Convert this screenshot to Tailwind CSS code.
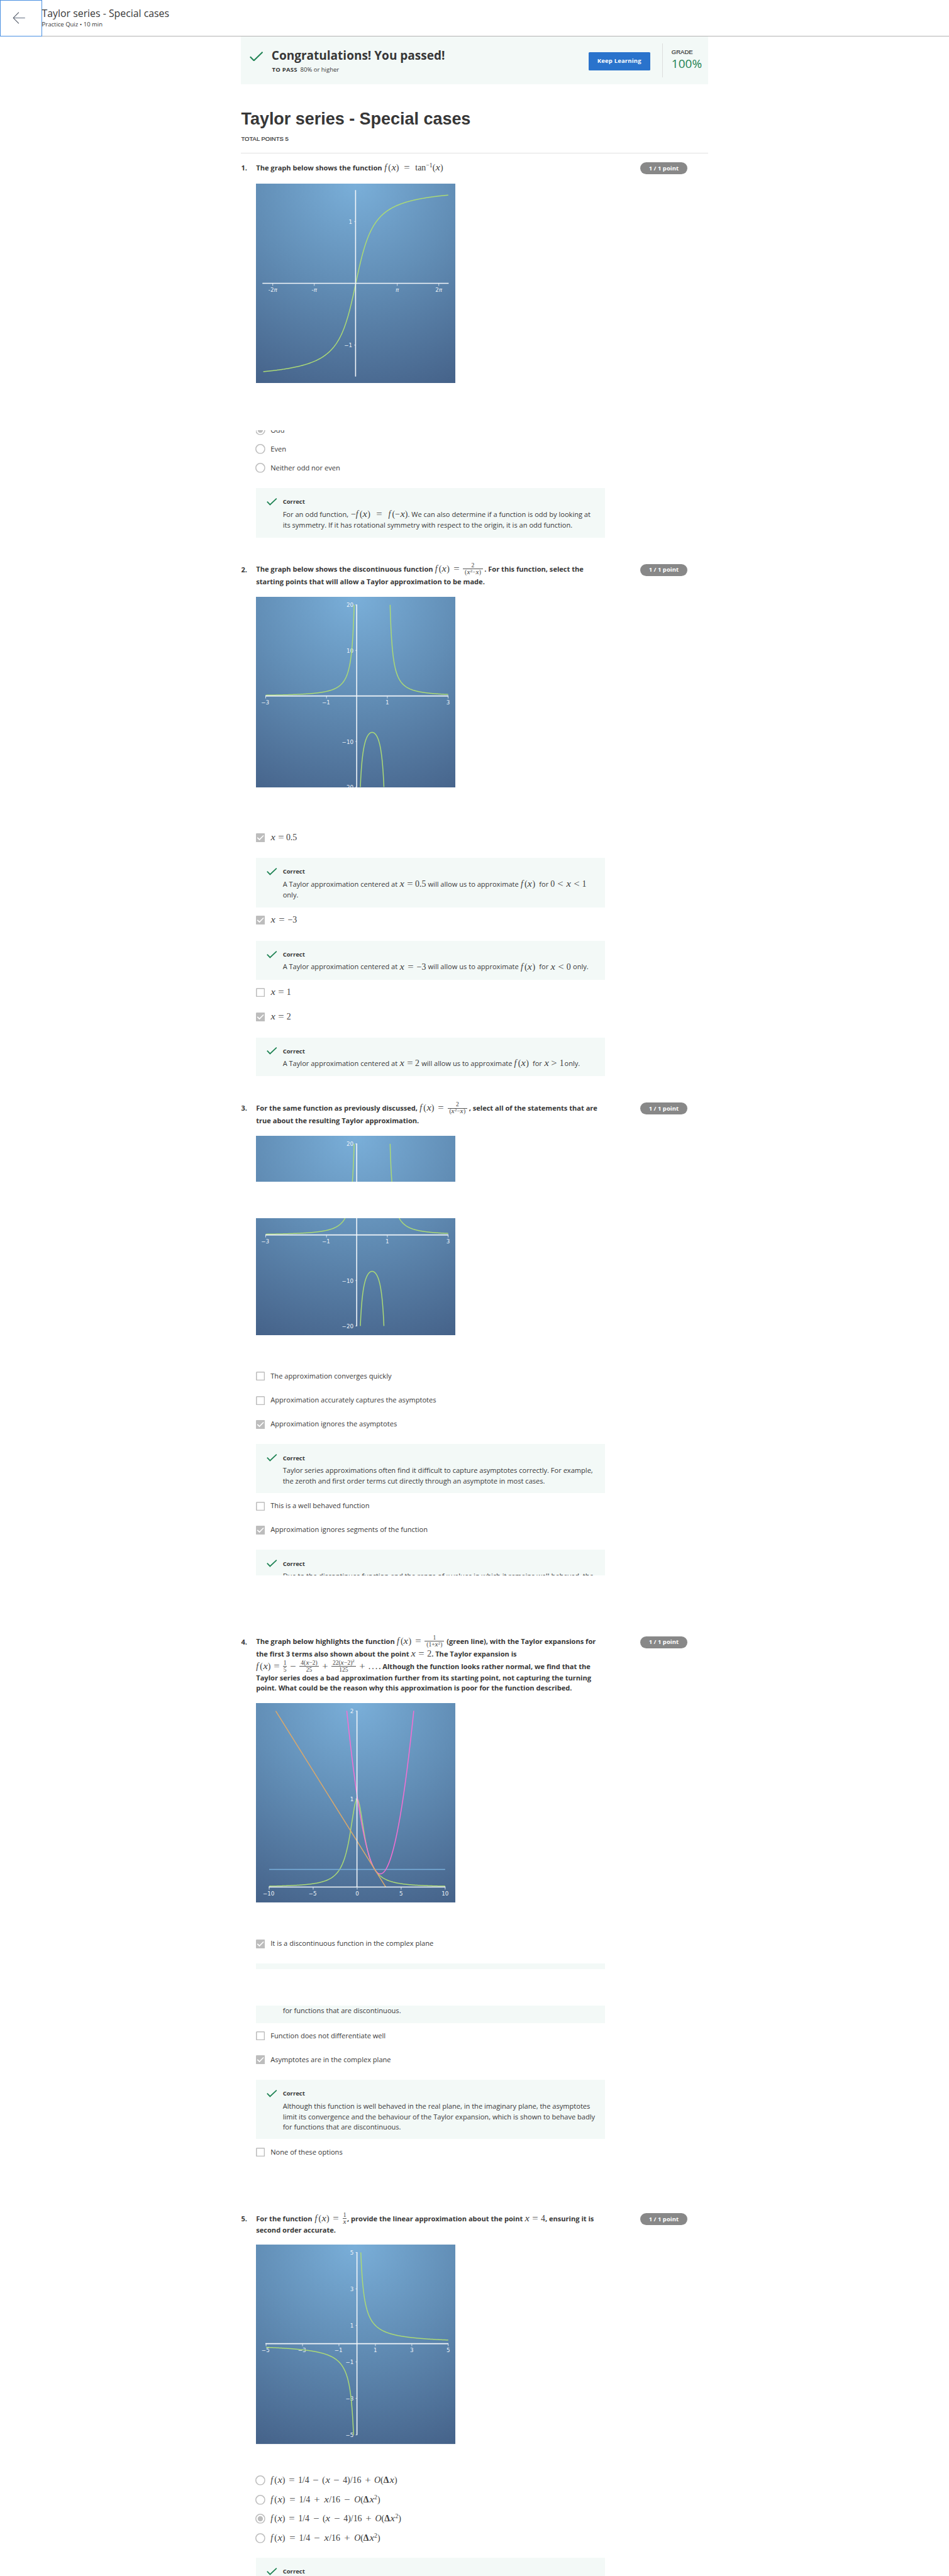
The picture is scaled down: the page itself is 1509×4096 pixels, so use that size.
<!DOCTYPE html>
<html lang="en">
<head>
<meta charset="utf-8">
<title>Taylor series - Special cases</title>
<script src="https://cdn.jsdelivr.net/npm/@tailwindcss/browser@4"></script>
</head>
<body class="bg-white overflow-x-hidden">
<svg class="hidden">
  <symbol id="tick" viewBox="0 0 21 15"><path d="M1 7.2 6.8 13.2 20 .8" fill="none" stroke="#1f8354" stroke-width="2.2"/></symbol>
  <symbol id="box-on" viewBox="0 0 18 18"><rect width="18" height="18" rx="1.5" fill="#bdbdbd"/><path d="M2.8 8.6 7 12.8 15.2 4.4" fill="none" stroke="#fff" stroke-width="2"/></symbol>
  <symbol id="box-off" viewBox="0 0 18 18"><rect x="1" y="1" width="16" height="16" rx="1" fill="#fff" stroke="#bdbdbd" stroke-width="2"/></symbol>
  <symbol id="radio-off" viewBox="0 0 20 20"><circle cx="10" cy="10" r="9" fill="#fff" stroke="#bdbdbd" stroke-width="2"/></symbol>
  <symbol id="radio-on" viewBox="0 0 20 20"><circle cx="10" cy="10" r="9" fill="#fff" stroke="#bdbdbd" stroke-width="2"/><circle cx="10" cy="10" r="5.3" fill="#bdbdbd"/></symbol>
</svg>
<div class="[zoom:0.7928] h-[5167px] overflow-hidden font-['Open_Sans',sans-serif] text-[14px] text-[#373737] whitespace-nowrap">

<header class="flex h-[73px] border-b border-[#b3b3b3]">
  <div class="flex h-[73px] w-[84px] items-center border border-[#4a90e2] border-b-2 pl-[24px]">
    <svg class="h-[24px] w-[25px]" viewBox="0 0 25 24" fill="none"><path d="M1.5 12H25" stroke="#8a93a0" stroke-width="1.8"/><path d="M12.5.8 1.5 12l11 11.2" stroke="#4b5361" stroke-width="1.3"/></svg>
  </div>
  <div class="pt-[13px]">
    <div class="h-[28px] text-[20px] leading-[28px]">Taylor series - Special cases</div>
    <div class="h-[18px] text-[12px] leading-[17px]">Practice Quiz • 10 min</div>
  </div>
</header>

<main class="mx-auto w-[936px]">
  <section class="flex h-[96px] bg-[#f3f9f7]">
    <svg class="ml-[17px] mt-[30px] h-[20px] w-[27px]" viewBox="0 0 27 20"><path d="M1 10.5 8.5 18 26 1" fill="none" stroke="#1f8354" stroke-width="2.6"/></svg>
    <div class="ml-[17px] w-[636px] pt-[20px]">
      <div class="h-[36px] text-[24px] font-bold leading-[36px]">Congratulations! You passed!</div>
      <div class="flex h-[20px] items-center gap-[6px] pl-px pt-[3px] text-[12px]"><b class="tracking-[0.3px]">TO PASS</b><span>80% or higher</span></div>
    </div>
    <div class="mt-[32px] flex h-[36px] w-[123px] items-center justify-center rounded-[2px] bg-[#2a73cc] text-[12px] font-bold tracking-[0.2px] text-white">Keep Learning</div>
    <div class="ml-[24px] mt-[14px] h-[68px] border-l border-[#ddd] pl-[18px] pt-[10px]">
      <div class="h-[16px] font-['Liberation_Sans'] text-[12px] leading-[16px] [-webkit-text-stroke:0.3px_#333]">GRADE</div>
      <div class="h-[28px] text-[24px] leading-[28px] text-[#1f8354]">100%</div>
    </div>
  </section>

  <h1 class="mt-[50px] h-[40px] font-['Liberation_Sans'] text-[34px] font-bold leading-[40px]">Taylor series - Special cases</h1>
  <div class="mt-[10px] h-[20px] font-['Liberation_Sans'] text-[12px] leading-[20px] [-webkit-text-stroke:0.3px_#333]">TOTAL POINTS 5</div>
  <div class="mt-[18px] h-px bg-[#e1e1e1]"></div>

  <!-- Question 1 -->
  <section>
    <div class="mt-[18px] flex font-bold">
      <div class="h-[22px] w-[30px] leading-[22px]">1.</div>
      <div class="h-[24px] w-[770px]">
        <div class="flex h-[22px] items-center gap-[4.5px]"><span>The graph below shows the function</span><span data-math="f(x) = tan^{−1}(x)" data-width="118"></span></div>
      </div>
      <div class="flex h-[24px] w-[95px] items-center justify-center rounded-full bg-[#888] text-[12px] text-white">1 / 1 point</div>
    </div>
    <div class="pl-[30px]">
      <svg data-plot="atan" class="mt-[18px] h-[400px] w-[400px]"></svg>
      <div class="mt-[95px] flex h-[19px] items-end overflow-hidden">
        <div class="flex h-[38px] items-center gap-[10px]"><svg class="-ml-px h-[20px] w-[20px]"><use href="#radio-on"/></svg>Odd</div>
      </div>
      <div class="flex h-[38px] items-center gap-[10px]"><svg class="-ml-px h-[20px] w-[20px]"><use href="#radio-off"/></svg>Even</div>
      <div class="flex h-[38px] items-center gap-[10px]"><svg class="-ml-px h-[20px] w-[20px]"><use href="#radio-off"/></svg>Neither odd nor even</div>
      <div class="mt-[21px] flex h-[99px] w-[700px] gap-[11px] bg-[#f3f9f7] pl-[21.5px] pt-[18px]">
        <svg class="mt-[2px] h-[15px] w-[21px]"><use href="#tick"/></svg>
        <div><div class="h-[20px] text-[12px] font-bold leading-[20px]">Correct</div>
          <div class="mt-[4px] flex h-[22px] items-center"><span class="mr-[5px]">For an odd function,</span><span data-math="−f(x) = f(−x)" data-width="114"></span><span>. We can also determine if a function is odd by looking at</span></div>
          <div class="h-[21px] leading-[21px]">its symmetry. If it has rotational symmetry with respect to the origin, it is an odd function.</div></div>
      </div>
    </div>
  </section>

  <!-- Question 2 -->
  <section>
    <div class="mt-[53px] flex font-bold">
      <div class="h-[22px] w-[30px] leading-[22px]">2.</div>
      <div class="h-[50px] w-[770px]">
        <div class="flex h-[22px] items-center"><span class="mr-[4px]">The graph below shows the discontinuous function</span><span data-math="f(x) = 2|(x^{2}−x)|40" data-width="96"></span><span class="ml-[3px]">. For this function, select the</span></div>
        <div class="h-[28px] leading-[28px]">starting points that will allow a Taylor approximation to be made.</div>
      </div>
      <div class="flex h-[24px] w-[95px] items-center justify-center rounded-full bg-[#888] text-[12px] text-white">1 / 1 point</div>
    </div>
    <div class="pl-[30px]">
      <div class="mt-[16px] h-[383px] overflow-hidden"><svg data-plot="rational" class="h-[400px] w-[400px]"></svg></div>
      <div class="mt-[91px] flex h-[18px] items-center gap-[11px]"><svg class="h-[18px] w-[18px]"><use href="#box-on"/></svg><span data-math="x = 0.5" data-width="53"></span></div>
      <div class="mt-[32px] flex h-[99px] w-[700px] gap-[11px] bg-[#f3f9f7] pl-[21.5px] pt-[18px]">
        <svg class="mt-[2px] h-[15px] w-[21px]"><use href="#tick"/></svg>
        <div><div class="h-[20px] text-[12px] font-bold leading-[20px]">Correct</div>
          <div class="mt-[4px] flex h-[22px] items-center gap-[4px]"><span>A Taylor approximation centered at</span><span data-math="x = 0.5" data-width="53"></span><span>will allow us to approximate</span><span data-math="f(x)" data-width="33"></span><span>for</span><span data-math="0 &lt; x &lt; 1" data-width="72"></span></div>
          <div class="h-[21px] leading-[21px]">only.</div></div>
      </div>
      <div class="mt-[17px] flex h-[18px] items-center gap-[11px]"><svg class="h-[18px] w-[18px]"><use href="#box-on"/></svg><span data-math="x = −3" data-width="53"></span></div>
      <div class="mt-[32px] flex h-[78px] w-[700px] gap-[11px] bg-[#f3f9f7] pl-[21.5px] pt-[18px]">
        <svg class="mt-[2px] h-[15px] w-[21px]"><use href="#tick"/></svg>
        <div><div class="h-[20px] text-[12px] font-bold leading-[20px]">Correct</div>
          <div class="mt-[4px] flex h-[22px] items-center gap-[4px]"><span>A Taylor approximation centered at</span><span data-math="x = −3" data-width="53"></span><span>will allow us to approximate</span><span data-math="f(x)" data-width="33"></span><span>for</span><span data-math="x &lt; 0" data-width="41"></span><span>only.</span></div></div>
      </div>
      <div class="mt-[17px] flex h-[18px] items-center gap-[11px]"><svg class="h-[18px] w-[18px]"><use href="#box-off"/></svg><span data-math="x = 1" data-width="41"></span></div>
      <div class="mt-[31px] flex h-[18px] items-center gap-[11px]"><svg class="h-[18px] w-[18px]"><use href="#box-on"/></svg><span data-math="x = 2" data-width="41"></span></div>
      <div class="mt-[32px] flex h-[78px] w-[700px] gap-[11px] bg-[#f3f9f7] pl-[21.5px] pt-[18px]">
        <svg class="mt-[2px] h-[15px] w-[21px]"><use href="#tick"/></svg>
        <div><div class="h-[20px] text-[12px] font-bold leading-[20px]">Correct</div>
          <div class="mt-[4px] flex h-[22px] items-center gap-[4px]"><span>A Taylor approximation centered at</span><span data-math="x = 2" data-width="40"></span><span>will allow us to approximate</span><span data-math="f(x)" data-width="33"></span><span>for</span><span data-math="x &gt; 1" data-width="40"></span><span class="-ml-[3px]">only.</span></div></div>
      </div>
    </div>
  </section>

  <!-- Question 3 -->
  <section>
    <div class="mt-[53px] flex font-bold">
      <div class="h-[23px] w-[30px] leading-[23px]">3.</div>
      <div class="h-[49px] w-[770px]">
        <div class="flex h-[23px] items-center"><span class="mr-[4px]">For the same function as previously discussed,</span><span data-math="f(x) = 2|(x^{2}−x)|40" data-width="96"></span><span class="ml-[3px]">, select all of the statements that are</span></div>
        <div class="h-[26px] leading-[26px]">true about the resulting Taylor approximation.</div>
      </div>
      <div class="flex h-[24px] w-[95px] items-center justify-center rounded-full bg-[#888] text-[12px] text-white">1 / 1 point</div>
    </div>
    <div class="pl-[30px]">
      <div class="relative mt-[17px] h-[400px] w-[400px]"><svg data-plot="rational" class="h-[400px] w-[400px]"></svg><div class="absolute inset-x-0 top-[92px] h-[73px] bg-white"></div></div>
      <div class="mt-[74px] flex h-[18px] items-center gap-[11px]"><svg class="h-[18px] w-[18px]"><use href="#box-off"/></svg>The approximation converges quickly</div>
      <div class="mt-[30px] flex h-[18px] items-center gap-[11px]"><svg class="h-[18px] w-[18px]"><use href="#box-off"/></svg>Approximation accurately captures the asymptotes</div>
      <div class="mt-[30px] flex h-[18px] items-center gap-[11px]"><svg class="h-[18px] w-[18px]"><use href="#box-on"/></svg>Approximation ignores the asymptotes</div>
      <div class="mt-[31px] flex h-[98px] w-[700px] gap-[11px] bg-[#f3f9f7] pl-[21.5px] pt-[18px]">
        <svg class="mt-[2px] h-[15px] w-[21px]"><use href="#tick"/></svg>
        <div><div class="h-[20px] text-[12px] font-bold leading-[20px]">Correct</div>
          <div class="mt-[5px] h-[21px] leading-[21px]">Taylor series approximations often find it difficult to capture asymptotes correctly. For example,</div>
          <div class="h-[21px] leading-[21px]">the zeroth and first order terms cut directly through an asymptote in most cases.</div></div>
      </div>
      <div class="mt-[17px] flex h-[18px] items-center gap-[11px]"><svg class="h-[18px] w-[18px]"><use href="#box-off"/></svg>This is a well behaved function</div>
      <div class="mt-[30px] flex h-[18px] items-center gap-[11px]"><svg class="h-[18px] w-[18px]"><use href="#box-on"/></svg>Approximation ignores segments of the function</div>
      <div class="mt-[31px] flex h-[51px] w-[700px] gap-[11px] overflow-hidden bg-[#f3f9f7] pl-[21.5px] pt-[18px]">
        <svg class="mt-[2px] h-[15px] w-[21px]"><use href="#tick"/></svg>
        <div><div class="h-[20px] text-[12px] font-bold leading-[20px]">Correct</div>
          <div class="mt-[5px] h-[21px] leading-[21px]">Due to the discontinues function and the range of <i>x</i> values in which it remains well behaved, the</div></div>
      </div>
    </div>
  </section>

  <!-- Question 4 -->
  <section>
    <div class="mt-[122px] flex font-bold">
      <div class="h-[22px] w-[30px] leading-[22px]">4.</div>
      <div class="h-[113px] w-[770px]">
        <div class="flex h-[22px] items-center"><span class="mr-[4px]">The graph below highlights the function</span><span data-math="f(x) = 1|(1+x^{2})|39" data-width="95"></span><span class="ml-[5px]">(green line), with the Taylor expansions for</span></div>
        <div class="flex h-[28px] items-center"><span class="mr-[4px]">the first 3 terms also shown about the point</span><span data-math="x = 2" data-width="41"></span><span>. The Taylor expansion is</span></div>
        <div class="flex h-[22px] items-center"><span data-math="f(x) = 1|5|8 − 4(x−2)|25|39 + 22(x−2)^{2}|125|50 + ..." data-width="246"></span><span>. Although the function looks rather normal, we find that the</span></div>
        <div class="h-[23px] leading-[23px]">Taylor series does a bad approximation further from its starting point, not capturing the turning</div>
        <div class="h-[18px] leading-[18px]">point. What could be the reason why this approximation is poor for the function described.</div>
      </div>
      <div class="flex h-[24px] w-[95px] items-center justify-center rounded-full bg-[#888] text-[12px] text-white">1 / 1 point</div>
    </div>
    <div class="pl-[30px]">
      <svg data-plot="expansion" class="mt-[21px] h-[400px] w-[400px]"></svg>
      <div class="mt-[74px] flex h-[18px] items-center gap-[11px]"><svg class="h-[18px] w-[18px]"><use href="#box-on"/></svg>It is a discontinuous function in the complex plane</div>
      <div class="mt-[31px] h-[11px] w-[700px] bg-[#f3f9f7]"></div>
      <div class="mt-[73px] h-[35px] w-[700px] bg-[#f3f9f7] pl-[53.5px] leading-[21px]">for functions that are discontinuous.</div>
      <div class="mt-[17px] flex h-[18px] items-center gap-[11px]"><svg class="h-[18px] w-[18px]"><use href="#box-off"/></svg>Function does not differentiate well</div>
      <div class="mt-[30px] flex h-[18px] items-center gap-[11px]"><svg class="h-[18px] w-[18px]"><use href="#box-on"/></svg>Asymptotes are in the complex plane</div>
      <div class="mt-[31px] flex h-[119px] w-[700px] gap-[11px] bg-[#f3f9f7] pl-[21.5px] pt-[18px]">
        <svg class="mt-[2px] h-[15px] w-[21px]"><use href="#tick"/></svg>
        <div><div class="h-[20px] text-[12px] font-bold leading-[20px]">Correct</div>
          <div class="mt-[5px] h-[21px] leading-[21px]">Although this function is well behaved in the real plane, in the imaginary plane, the asymptotes</div>
          <div class="h-[21px] leading-[21px]">limit its convergence and the behaviour of the Taylor expansion, which is shown to behave badly</div>
          <div class="h-[21px] leading-[21px]">for functions that are discontinuous.</div></div>
      </div>
      <div class="mt-[17px] flex h-[18px] items-center gap-[11px]"><svg class="h-[18px] w-[18px]"><use href="#box-off"/></svg>None of these options</div>
    </div>
  </section>

  <!-- Question 5 -->
  <section>
    <div class="mt-[114px] flex font-bold">
      <div class="h-[22px] w-[30px] leading-[22px]">5.</div>
      <div class="h-[44px] w-[770px]">
        <div class="flex h-[22px] items-center"><span class="mr-[5px]">For the function</span><span data-math="f(x) = 1|x|8" data-width="64"></span><span class="ml-px mr-[4px]">, provide the linear approximation about the point</span><span data-math="x = 4" data-width="41"></span><span>, ensuring it is</span></div>
        <div class="h-[22px] leading-[22px]">second order accurate.</div>
      </div>
      <div class="flex h-[24px] w-[95px] items-center justify-center rounded-full bg-[#888] text-[12px] text-white">1 / 1 point</div>
    </div>
    <div class="pl-[30px]">
      <svg data-plot="reciprocal" class="mt-[19px] h-[400px] w-[400px]"></svg>
      <div class="mt-[54px] flex h-[38px] items-center gap-[10px]"><svg class="-ml-px h-[20px] w-[20px]"><use href="#radio-off"/></svg><span data-math="f(x) = 1/4 − (x − 4)/16 + O(Δx)" data-width="254"></span></div>
      <div class="flex h-[39px] items-center gap-[10px]"><svg class="-ml-px h-[20px] w-[20px]"><use href="#radio-off"/></svg><span data-math="f(x) = 1/4 + x/16 − O(Δx^{2})" data-width="220"></span></div>
      <div class="flex h-[38px] items-center gap-[10px]"><svg class="-ml-px h-[20px] w-[20px]"><use href="#radio-on"/></svg><span data-math="f(x) = 1/4 − (x − 4)/16 + O(Δx^{2})" data-width="262"></span></div>
      <div class="flex h-[39px] items-center gap-[10px]"><svg class="-ml-px h-[20px] w-[20px]"><use href="#radio-off"/></svg><span data-math="f(x) = 1/4 − x/16 + O(Δx^{2})" data-width="220"></span></div>
      <div class="mt-[20px] flex h-[40px] w-[700px] gap-[11px] bg-[#f3f9f7] pl-[21.5px] pt-[18px]">
        <svg class="mt-[2px] h-[15px] w-[21px]"><use href="#tick"/></svg>
        <div class="h-[20px] text-[12px] font-bold leading-[20px]">Correct</div>
      </div>
    </div>
  </section>
</main>
</div>

<script>
// Formulas: terms are separated by spaces, "a|b|w" is a fraction w pixels wide, ^{n} a superscript.
const term = s => s.replace(/\^\{(.+?)\}|tan|Δ|f|x|O/g, (m, p) =>
  p ? `<sup class="text-[0.7em] leading-none">${p}</sup>` :
  m === 'tan' ? 'tan' :
  m === 'Δ' ? '<b class="mr-px">Δ</b>' :
  m === 'x' ? '<i class="mx-[0.06em] inline-block scale-x-120">x</i>' :
  m === 'f' ? '<i class="mr-[0.16em]">f</i>' : `<i>${m}</i>`);
document.querySelectorAll('[data-math]').forEach(el => {
  el.className = "flex shrink-0 items-center justify-between font-['Liberation_Serif'] text-[17.5px] leading-[18px] font-normal text-[#3c3c3c]";
  el.style.width = el.dataset.width + 'px';
  el.innerHTML = el.dataset.math.split(' ').map(t => {
    if (t.includes('|')) {
      const [a, b, w] = t.split('|');
      return `<span class="flex flex-col items-center text-[12px] leading-[12px]" style="width:${w}px"><span>${term(a)}</span><span class="w-full border-t border-[#555] pt-px text-center">${term(b)}</span></span>`;
    }
    if (/^[=+−<>]$/.test(t)) return `<span class="inline-block scale-x-120">${t.replace('<', '&lt;')}</span>`;
    if (t === '...') return '<span class="tracking-[2.5px]">...</span>';
    return `<span>${term(t)}</span>`;
  }).join('');
});

// Each plot: origin and unit in pixels, axis extents, ticks and sampled curves.
const GREEN = '#abd976';
const plots = {
  atan: {ox:200.2, oy:200, sx:26.5, sy:123.9, ax:[13,386.5], ay:[13,387], ly:213,
    xt:[[-2*Math.PI,'-2<tspan font-style="italic">π</tspan>'],[-Math.PI,'-<tspan font-style="italic">π</tspan>'],[Math.PI,'<tspan font-style="italic">π</tspan>'],[2*Math.PI,'2<tspan font-style="italic">π</tspan>']],
    yt:[[1,'1'],[-1,'−1']], curves:[[GREEN,-7,7,Math.atan]]},
  rational: {ox:202.5, oy:198.8, sx:61, sy:9.13, ax:[19,386], ay:[15.5,382], ly:212,
    xt:[[-3,'−3'],[-1,'−1'],[1,'1'],[3,'3']], yt:[[20,'20'],[10,'10'],[-10,'−10'],[-20,'−20']],
    curves:[[GREEN,-3,-0.0916,x=>2/(x*x-x)],[GREEN,0.1127,0.8873,x=>2/(x*x-x)],[GREEN,1.0916,3,x=>2/(x*x-x)]]},
  expansion: {ox:203, oy:369, sx:17.65, sy:176.5, ax:[25.5,380], ay:[15,369], ly:382,
    xt:[[-10,'−10'],[-5,'−5'],[0,'0'],[5,'5'],[10,'10']], yt:[[2,'2'],[1,'1']],
    curves:[[GREEN,-10,10,x=>1/(1+x*x)],['#7ab0dc',-10,10,x=>0.2],['#f56fd3',-1.18,6.43,x=>0.2-0.16*(x-2)+0.128*(x-2)**2],['#d9a86c',-9.25,3.25,x=>0.2-0.16*(x-2)]]},
  reciprocal: {ox:203, oy:198.8, sx:36.54, sy:36.6, ax:[19,386], ay:[15,382], ly:212,
    xt:[[-5,'−5'],[-3,'−3'],[-1,'−1'],[1,'1'],[3,'3'],[5,'5']], yt:[[5,'5'],[3,'3'],[1,'1'],[-1,'−1'],[-3,'−3'],[-5,'−5']],
    curves:[[GREEN,-5,-0.2,x=>1/x],[GREEN,0.2,5,x=>1/x]]}
};
document.querySelectorAll('[data-plot]').forEach((svg, n) => {
  const p = plots[svg.dataset.plot];
  const X = x => p.ox + x * p.sx, Y = y => p.oy - y * p.sy;
  let s = `<defs><radialGradient id="bg${n}" gradientUnits="userSpaceOnUse" cx="200" cy="0" r="447"><stop offset="0" stop-color="#7aafd9"/><stop offset=".45" stop-color="#628eb6"/><stop offset="1" stop-color="#456289"/></radialGradient></defs><rect width="400" height="400" fill="url(#bg${n})"/>`;
  s += `<g fill="#eef3f8" font-family="DejaVu Sans" font-size="11">`;
  for (const [v, t] of p.xt) s += `<text x="${X(v) - (t[0] === '−' ? 1 : 0)}" y="${p.ly + 4}" text-anchor="middle">${t}</text>`;
  for (const [v, t] of p.yt) s += `<text x="${p.ox - 7}" y="${Y(v) + 4.5}" text-anchor="end">${t}</text>`;
  s += '</g>';
  for (const [c, a, b, f] of p.curves) {
    let d = '';
    for (let i = 0; i <= 240; i++) { const x = a + (b - a) * i / 240; d += (i ? 'L' : 'M') + X(x).toFixed(2) + ' ' + Y(f(x)).toFixed(2); }
    s += `<path d="${d}" fill="none" stroke="${c}" stroke-width="1.9"/>`;
  }
  s += `<g stroke="#f2f6fa" stroke-width="2"><path d="M${p.ax[0]} ${p.oy}H${p.ax[1]}M${p.ox - .4} ${p.ay[0]}V${p.ay[1]}"/></g><g stroke="#f2f6fa" stroke-width="1">`;
  for (const [v] of p.xt) s += `<path d="M${X(v)} ${p.oy}v5"/>`;
  for (const [v] of p.yt) s += `<path d="M${p.ox} ${Y(v)}h-3"/>`;
  svg.setAttribute('viewBox', '0 0 400 400');
  svg.innerHTML = s + '</g>';
});
</script>
</body>
</html>
